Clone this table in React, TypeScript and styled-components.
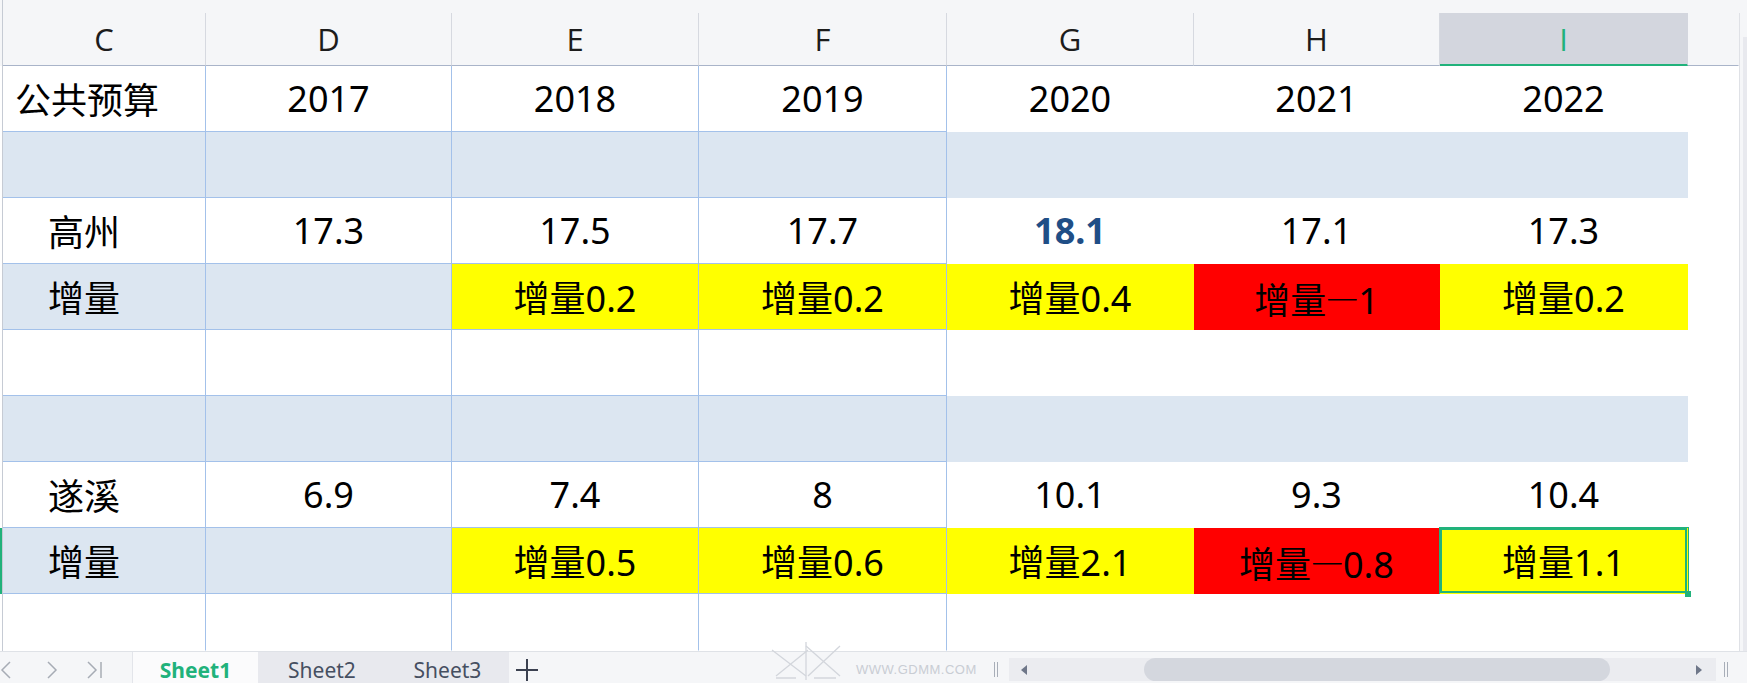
import styled, { createGlobalStyle } from "styled-components";

const GlobalStyle = createGlobalStyle`
  html, body {
    margin: 0;
    padding: 0;
    background: #ffffff;
  }
  body {
    width: 1747px;
    height: 683px;
    overflow: hidden;
    font-family: "Noto Sans", "Noto Sans CJK SC", sans-serif;
  }
`;

type Fill = "white" | "blue" | "yellow" | "red";

const fills: Record<Fill, string> = {
  white: "#ffffff",
  blue: "#dce6f1",
  yellow: "#ffff00",
  red: "#ff0000",
};

const GRID_LINE = "#a3c1ea";
const GREEN = "#21b27b";

interface CellData {
  text?: string;
  fill?: Fill;
  strong?: boolean;
  selected?: boolean;
}

interface RowData {
  label?: string;
  indent: number;
  fill: Fill;
  cells: CellData[];
  active?: boolean;
}

const blankRow = (fill: Fill): RowData => ({
  indent: 0,
  fill,
  cells: Array.from({ length: 6 }, () => ({ fill })),
});

const rows: RowData[] = [
  {
    label: "公共预算",
    indent: 12,
    fill: "white",
    cells: ["2017", "2018", "2019", "2020", "2021", "2022"].map((text) => ({ text })),
  },
  blankRow("blue"),
  {
    label: "高州",
    indent: 45,
    fill: "white",
    cells: [
      { text: "17.3" },
      { text: "17.5" },
      { text: "17.7" },
      { text: "18.1", strong: true },
      { text: "17.1" },
      { text: "17.3" },
    ],
  },
  {
    label: "增量",
    indent: 45,
    fill: "blue",
    cells: [
      { fill: "blue" },
      { text: "增量0.2", fill: "yellow" },
      { text: "增量0.2", fill: "yellow" },
      { text: "增量0.4", fill: "yellow" },
      { text: "增量—1", fill: "red" },
      { text: "增量0.2", fill: "yellow" },
    ],
  },
  blankRow("white"),
  blankRow("blue"),
  {
    label: "遂溪",
    indent: 45,
    fill: "white",
    cells: ["6.9", "7.4", "8", "10.1", "9.3", "10.4"].map((text) => ({ text })),
  },
  {
    label: "增量",
    indent: 45,
    fill: "blue",
    active: true,
    cells: [
      { fill: "blue" },
      { text: "增量0.5", fill: "yellow" },
      { text: "增量0.6", fill: "yellow" },
      { text: "增量2.1", fill: "yellow" },
      { text: "增量—0.8", fill: "red" },
      { text: "增量1.1", fill: "yellow", selected: true },
    ],
  },
  blankRow("white"),
];

const letters = ["C", "D", "E", "F", "G", "H", "I"];

const Page = styled.div`
  display: flex;
  flex-direction: column;
  width: 1747px;
  height: 683px;
  overflow: hidden;
`;

const Main = styled.div`
  display: flex;
  height: 651px;
`;

const Sheet = styled.div`
  display: grid;
  grid-template-columns: 3px 203px 246px 247px 248px 247px 246px 248px 51px;
  grid-template-rows: 66px repeat(8, 66px) 57px;
  width: 1739px;
  background: #ffffff;
`;

const Gutter = styled.div<{ $head?: boolean; $active?: boolean }>`
  box-sizing: border-box;
  background: ${(p) => (p.$head ? "#f5f6f8" : "#ffffff")};
  border-right: 1px solid #c6cbd4;
  box-shadow: ${(p) => (p.$active ? `inset 2px 0 0 ${GREEN}` : "none")};
`;

const ColHead = styled.div`
  display: flex;
  flex-direction: column;
  padding-top: 13px;
  background: #f5f6f8;
`;

const HeadLabel = styled.div<{ $selected?: boolean; $sep?: boolean }>`
  flex: 1;
  box-sizing: border-box;
  display: flex;
  align-items: center;
  justify-content: center;
  font-family: "Open Sans", sans-serif;
  font-size: 31px;
  color: ${(p) => (p.$selected ? GREEN : "#1c1c1c")};
  background: ${(p) => (p.$selected ? "#d3d6de" : "#f5f6f8")};
  border-right: 1px solid ${(p) => (p.$sep ? "#d6d9e0" : "transparent")};
  border-bottom: ${(p) => (p.$selected ? `2px solid ${GREEN}` : "1px solid #a9b4c9")};
`;

const Cell = styled.div<{
  $fill: Fill;
  $grid: boolean;
  $last: boolean;
  $indent?: number;
  $strong?: boolean;
  $selected?: boolean;
}>`
  position: relative;
  box-sizing: border-box;
  display: flex;
  align-items: center;
  justify-content: ${(p) => (p.$indent !== undefined ? "flex-start" : "center")};
  padding-left: ${(p) => p.$indent ?? 0}px;
  font-size: 36px;
  font-weight: ${(p) => (p.$strong ? 700 : 400)};
  color: ${(p) => (p.$strong ? "#1f4e86" : "#000000")};
  white-space: pre;
  background: ${(p) => fills[p.$fill]};
  border-right: 1px solid ${(p) => (p.$grid ? GRID_LINE : "transparent")};
  border-bottom: 1px solid
    ${(p) => (p.$grid && !p.$last ? GRID_LINE : "transparent")};
  box-shadow: ${(p) => (p.$selected ? `0 0 0 1px ${GREEN}, inset 0 0 0 2px ${GREEN}` : "none")};

  ${(p) =>
    p.$selected &&
    `
    &::after {
      content: "";
      position: absolute;
      right: -4px;
      bottom: -4px;
      width: 6px;
      height: 6px;
      background: ${GREEN};
      z-index: 2;
    }
  `}
`;

/* the dash in 增量—1 sits at CJK mid height */
const Dash = styled.span`
  font-family: "Noto Sans CJK SC", sans-serif;
  font-weight: 300;
  vertical-align: 0.1em;
`;

const CellText = ({ text }: { text?: string }) => {
  if (!text) return null;
  const parts = text.split("—");
  if (parts.length === 1) return <span>{text}</span>;
  return (
    <span>
      {parts[0]}
      <Dash>—</Dash>
      {parts[1]}
    </span>
  );
};

const Filler = styled.div`
  background: #ffffff;
`;

const VScroll = styled.div`
  display: flex;
  flex-direction: column;
  width: 8px;
  background: #f5f6f8;
`;

const VRail = styled.div`
  flex: 1;
  margin-top: 13px;
  display: flex;
  border-left: 1px solid #dfe1e6;
`;

const VTrack = styled.div`
  width: 4px;
  margin: 24px 0 0 3px;
  background: #e8e9ee;
`;

const TabBar = styled.div`
  position: relative;
  display: flex;
  height: 32px;
  box-sizing: border-box;
  border-top: 1px solid #dfe2e7;
  background: #f5f6f8;
`;

const Nav = styled.div`
  display: flex;
  align-items: center;
  width: 133px;
  padding-top: 4px;
  box-sizing: border-box;
  border-right: 1px solid #e3e5ea;
`;

const NavIcon = styled.svg<{ $ml: number }>`
  margin-left: ${(p) => p.$ml}px;
  flex: none;
`;

const Tab = styled.div<{ $active?: boolean; $w: number }>`
  width: ${(p) => p.$w}px;
  display: flex;
  align-items: center;
  justify-content: center;
  padding-top: 5px;
  box-sizing: border-box;
  font-size: 21px;
  font-weight: ${(p) => (p.$active ? 700 : 400)};
  color: ${(p) => (p.$active ? GREEN : "#464f61")};
  background: ${(p) => (p.$active ? "#fbfbfc" : "#e8e9ee")};
`;

const AddTab = styled.div`
  display: flex;
  align-items: center;
  padding: 5px 0 0 6px;
`;

const Watermark = styled.div`
  position: absolute;
  left: 768px;
  top: -12px;
  display: flex;
  align-items: flex-end;
  gap: 10px;
  pointer-events: none;
`;

const WatermarkText = styled.span`
  font-family: "Liberation Sans", sans-serif;
  font-size: 13px;
  letter-spacing: 0.5px;
  color: #c9cdd4;
  padding-bottom: 5px;
`;

const Spacer = styled.div`
  flex: 1;
`;

const Splitter = styled.div<{ $mr?: number; $ml?: number }>`
  align-self: center;
  margin: 4px ${(p) => p.$mr ?? 0}px 0 ${(p) => p.$ml ?? 0}px;
  width: 4px;
  height: 15px;
  box-sizing: border-box;
  border-left: 1px solid #a8aeb8;
  border-right: 1px solid #a8aeb8;
`;

const HTrack = styled.div`
  display: flex;
  align-items: center;
  align-self: flex-start;
  width: 707px;
  height: 23px;
  margin-top: 6px;
  padding: 0 14px 0 12px;
  box-sizing: border-box;
  background: #ebecf0;
`;

const Thumb = styled.div`
  width: 466px;
  height: 23px;
  margin-left: 117px;
  border-radius: 12px;
  background: #d4d7de;
`;

const TrackArrow = styled.svg<{ $auto?: boolean }>`
  flex: none;
  margin-left: ${(p) => (p.$auto ? "auto" : "0")};
`;

export default function App() {
  return (
    <Page>
      <GlobalStyle />
      <Main>
        <Sheet>
          <Gutter $head />
          {letters.map((l, i) => (
            <ColHead key={l}>
              <HeadLabel $selected={l === "I"} $sep={i < 6}>
                {l}
              </HeadLabel>
            </ColHead>
          ))}
          <ColHead>
            <HeadLabel />
          </ColHead>

          {rows.map((row, r) => {
            const last = r === rows.length - 1;
            return [
              <Gutter key={`g${r}`} $active={row.active} />,
              <Cell
                key={`l${r}`}
                $fill={row.fill}
                $grid
                $last={last}
                $indent={row.indent}
              >
                {row.label}
              </Cell>,
              ...row.cells.map((c, i) => (
                <Cell
                  key={`c${r}-${i}`}
                  $fill={c.fill ?? "white"}
                  $grid={i < 3}
                  $last={last}
                  $strong={c.strong}
                  $selected={c.selected}
                >
                  <CellText text={c.text} />
                </Cell>
              )),
              <Filler key={`f${r}`} />,
            ];
          })}
        </Sheet>
        <VScroll>
          <VRail>
            <VTrack />
          </VRail>
        </VScroll>
      </Main>

      <TabBar>
        <Nav>
          <NavIcon $ml={0} width="12" height="18" viewBox="0 0 12 18">
            <path d="M10 1 L2 9 L10 17" fill="none" stroke="#a7acb5" strokeWidth="1.5" />
          </NavIcon>
          <NavIcon $ml={34} width="12" height="18" viewBox="0 0 12 18">
            <path d="M2 1 L10 9 L2 17" fill="none" stroke="#a7acb5" strokeWidth="1.5" />
          </NavIcon>
          <NavIcon $ml={28} width="18" height="18" viewBox="0 0 18 18">
            <path d="M2 1 L10 9 L2 17" fill="none" stroke="#a7acb5" strokeWidth="1.5" />
            <path d="M15 1 L15 17" fill="none" stroke="#a7acb5" strokeWidth="1.5" />
          </NavIcon>
        </Nav>
        <Tab $active $w={125}>Sheet1</Tab>
        <Tab $w={128}>Sheet2</Tab>
        <Tab $w={123}>Sheet3</Tab>
        <AddTab>
          <svg width="24" height="24" viewBox="0 0 24 24">
            <path d="M12 1 V23 M1 12 H23" stroke="#3b4150" strokeWidth="2" />
          </svg>
        </AddTab>

        <Watermark>
          <svg width="78" height="42" viewBox="0 0 78 42">
            <g fill="none" stroke="#d3d6dc" strokeWidth="1.3">
              <path d="M4 10 L38 36 M8 36 L40 10 M38 6 L72 36 M40 36 L72 6" />
              <path d="M8 38 H28 M46 38 H68 M38 2 V40" />
            </g>
          </svg>
          <WatermarkText>WWW.GDMM.COM</WatermarkText>
        </Watermark>

        <Spacer />
        <Splitter $mr={11} />
        <HTrack>
          <TrackArrow width="6" height="10" viewBox="0 0 6 10">
            <path d="M6 0 L0 5 L6 10 Z" fill="#6f7789" />
          </TrackArrow>
          <Thumb />
          <TrackArrow $auto width="6" height="10" viewBox="0 0 6 10">
            <path d="M0 0 L6 5 L0 10 Z" fill="#6f7789" />
          </TrackArrow>
        </HTrack>
        <Splitter $ml={8} $mr={19} />
      </TabBar>
    </Page>
  );
}
